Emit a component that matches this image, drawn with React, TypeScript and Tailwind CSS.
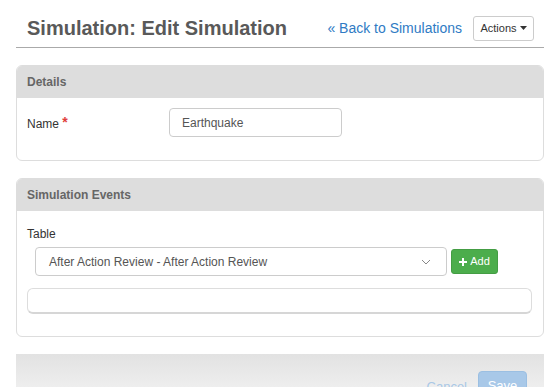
import React from 'react';

export default function App() {
  return (
    <div className="w-[558px] h-[387px] overflow-hidden bg-white pl-4 pr-[14px] font-['Liberation_Sans',Arial,sans-serif]">
      {/* Header */}
      <div className="h-[48px] pt-[9px] flex items-center justify-between border-b border-[#aaaaaa]">
        <h1 className="pl-[11px] text-[20px] font-bold text-[#595959] leading-none">Simulation: Edit Simulation</h1>
        <div className="flex items-center pr-[10px]">
          <a className="text-[14px] text-[#2f7bc4] leading-none">« Back to Simulations</a>
          <button className="ml-[11px] w-[61px] h-[25px] border border-[#cccccc] rounded-[3px] bg-white flex items-center justify-center text-[11px] text-[#333]">
            Actions
            <svg width="7" height="4" viewBox="0 0 7 4" className="ml-[3px]">
              <path d="M0 0 L7 0 L3.5 4 Z" fill="#333" />
            </svg>
          </button>
        </div>
      </div>

      {/* Details */}
      <div className="mt-[17px] border border-[#dddddd] rounded-[6px] overflow-hidden">
        <div className="h-[32px] bg-[#dddddd] px-[10px] flex items-center text-[12px] font-bold text-[#666666]">Details</div>
        <div className="px-[10px] pt-[10px] pb-[23px] flex items-center">
          <label className="w-[142px] text-[12px] text-[#333] self-start pt-[7px]">
            Name <span className="text-[#e0403a] font-bold align-top text-[14px] leading-none">*</span>
          </label>
          <div className="w-[173px] h-[29px] border border-[#cccccc] rounded-[4px] px-[12px] flex items-center text-[12px] text-[#555]">
            Earthquake
          </div>
        </div>
      </div>

      {/* Simulation Events */}
      <div className="mt-[17px] border border-[#dddddd] rounded-[6px] overflow-hidden">
        <div className="h-[32px] bg-[#dddddd] px-[10px] flex items-center text-[12px] font-bold text-[#666666]">Simulation Events</div>
        <div className="px-[10px] pt-[15px] pb-[22px]">
          <div className="text-[12px] leading-[16px] text-[#333]">Table</div>
          <div className="mt-[5px] pl-[8px] flex items-center">
            <div className="w-[412px] h-[29px] border border-[#cccccc] rounded-[4px] pl-[13px] pr-[12px] flex items-center justify-between text-[12px] text-[#555]">
              <span>After Action Review - After Action Review</span>
              <svg width="10" height="6" viewBox="0 0 10 6" className="mr-[3px]">
                <path d="M1 1 L5 5 L9 1" stroke="#888" strokeWidth="1" fill="none" />
              </svg>
            </div>
            <button className="ml-[4px] w-[47px] h-[25px] rounded-[3px] bg-[#4cad4c] border border-[#449d44] flex items-center justify-center text-[11px] text-white">
              <svg width="8" height="8" viewBox="0 0 8 8" className="mr-[3px]">
                <path d="M3 0 H5 V3 H8 V5 H5 V8 H3 V5 H0 V3 H3 Z" fill="white" />
              </svg>
              Add
            </button>
          </div>
          <div className="mt-[12px] h-[26px] w-[505px] border border-[#dddddd] border-b-2 border-b-[#d6d6d6] rounded-[6px]"></div>
        </div>
      </div>

      {/* Footer */}
      <div className="mt-[17px] h-[60px] bg-gradient-to-b from-[#e2e2e2] to-[#f8f8f8] pt-[17px] pr-[17px] flex items-start justify-end">
        <span className="mt-[6px] mr-[11px] text-[13px] text-[#a9c8e6]">Cancel</span>
        <button className="w-[49px] h-[30px] rounded-[4px] bg-[#a8c8e8] border border-[#9bbfe2] text-[13px] text-white">Save</button>
      </div>
    </div>
  );
}
